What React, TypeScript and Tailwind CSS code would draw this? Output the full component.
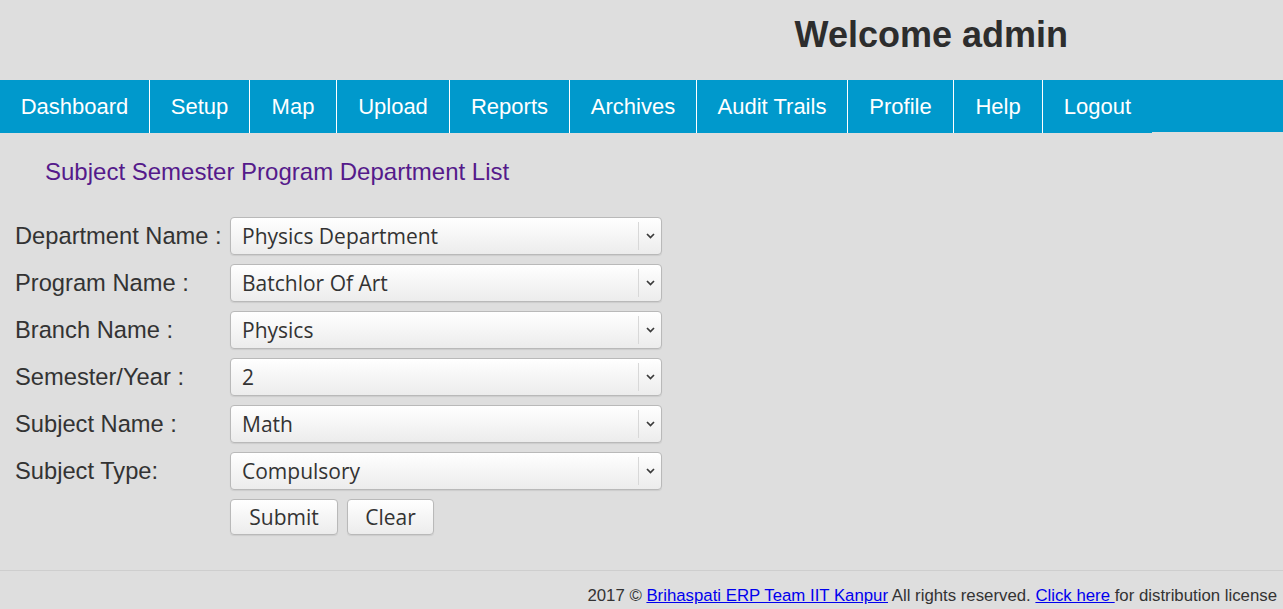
import React from "react";

const navItems = [
  { label: "Dashboard", w: "w-[150px]" },
  { label: "Setup", w: "w-[100px]" },
  { label: "Map", w: "w-[87px]" },
  { label: "Upload", w: "w-[113px]" },
  { label: "Reports", w: "w-[120px]" },
  { label: "Archives", w: "w-[127px]" },
  { label: "Audit Trails", w: "w-[151px]" },
  { label: "Profile", w: "w-[106px]" },
  { label: "Help", w: "w-[89px]" },
  { label: "Logout", w: "w-[109px]" },
];

const rows = [
  { label: "Department Name :", value: "Physics Department" },
  { label: "Program Name :", value: "Batchlor Of Art" },
  { label: "Branch Name :", value: "Physics" },
  { label: "Semester/Year :", value: "2" },
  { label: "Subject Name :", value: "Math" },
  { label: "Subject Type:", value: "Compulsory" },
];

function FakeSelect({ value }: { value: string }) {
  return (
    <div className="flex h-[38px] w-[432px] items-center rounded-[4px] border border-[#b9b9b9] bg-gradient-to-b from-white to-[#ececec] shadow-[0_1px_1px_rgba(0,0,0,0.08)]">
      <span
        className="flex-1 pl-[11px] text-[21px] leading-none text-[#333]"
        style={{ fontFamily: '"Open Sans", "Noto Sans", sans-serif' }}
      >
        {value}
      </span>
      <span className="h-[28px] w-px bg-[#d8d8d8]" />
      <span className="flex w-[22px] items-center justify-center">
        <svg width="9" height="6" viewBox="0 0 9 6">
          <path d="M1 1 L4.5 4.5 L8 1" fill="none" stroke="#3a3a3a" strokeWidth="1.7" />
        </svg>
      </span>
    </div>
  );
}

function Btn({ label, w }: { label: string; w: string }) {
  return (
    <div
      className={`flex h-[36px] ${w} items-center justify-center rounded-[4px] border border-[#b9b9b9] bg-gradient-to-b from-white to-[#ececec] text-[21px] leading-none text-[#333] shadow-[0_1px_1px_rgba(0,0,0,0.08)]`}
      style={{ fontFamily: '"Open Sans", "Noto Sans", sans-serif' }}
    >
      {label}
    </div>
  );
}

export default function App() {
  return (
    <div
      className="min-h-[609px] w-full bg-[#dedede] text-[#333]"
      style={{ fontFamily: '"Liberation Sans", Arial, sans-serif' }}
    >
      {/* header */}
      <div className="flex h-[80px] pt-[8px]">
        <div className="flex-1" />
        <h1 className="text-[36px] font-bold leading-normal text-[#2d2d2d]">Welcome admin</h1>
        <div className="w-[215px]" />
      </div>

      {/* nav */}
      <div className="h-[52px] bg-[#0099cc]">
        <ul className="flex">
          {navItems.map((n, i) => (
            <li
              key={n.label}
              className={`flex h-[53px] ${n.w} items-center justify-center bg-[#0099cc] text-[22px] text-white ${
                i < navItems.length - 1 ? "border-r border-white" : ""
              }`}
            >
              {n.label}
            </li>
          ))}
        </ul>
      </div>

      {/* title */}
      <div className="pl-[45px] pt-[22px]">
        <h2 className="text-[24px] leading-normal text-[#551a8b]">
          Subject Semester Program Department List
        </h2>
      </div>

      {/* form */}
      <div className="flex flex-col gap-[9px] pl-[15px] pt-[27px]">
        {rows.map((r) => (
          <div key={r.label} className="flex items-center">
            <div className="w-[215px] pt-[2px] text-[23.7px] leading-none">{r.label}</div>
            <FakeSelect value={r.value} />
          </div>
        ))}
        <div className="flex gap-[9px] pl-[215px]">
          <Btn label="Submit" w="w-[108px]" />
          <Btn label="Clear" w="w-[87px]" />
        </div>
      </div>

      {/* footer */}
      <div className="mt-[35px] border-t border-[#cecece] pt-[12px] pr-[6px] text-right text-[16.8px] leading-normal text-[#333]">
        2017 ©{" "}
        <a href="#" className="text-[#0000ee] underline">
          Brihaspati ERP Team IIT Kanpur
        </a>{" "}
        All rights reserved.{" "}
        <a href="#" className="text-[#0000ee] underline">
          Click here{" "}
        </a>
        for distribution license
      </div>
    </div>
  );
}
